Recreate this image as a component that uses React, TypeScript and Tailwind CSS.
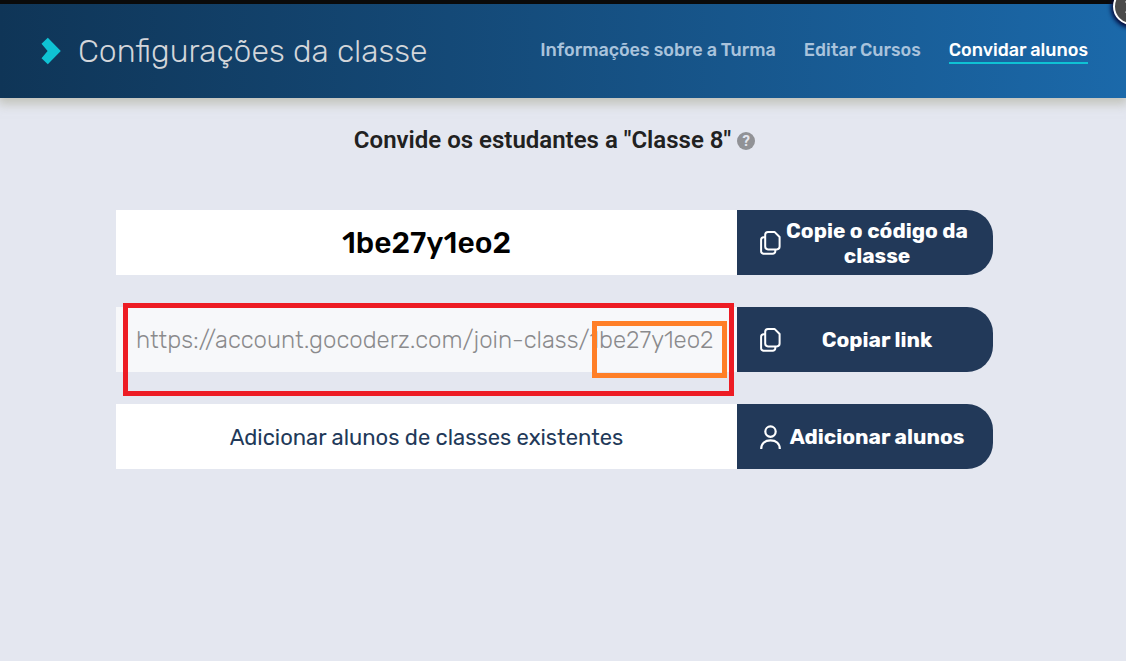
import type { ReactNode } from 'react';

const navItems = [
  { label: 'Informações sobre a Turma', active: false },
  { label: 'Editar Cursos', active: false },
  { label: 'Convidar alunos', active: true },
];

function ChevronMark() {
  return (
    <svg width="20" height="28" viewBox="0 0 20 28" className="shrink-0" aria-hidden="true">
      <path d="M0.5 6.8 6.8 0.8 19.8 14 6.8 27.2 0.5 21.2 6.6 14Z" fill="#0fc2d4" />
    </svg>
  );
}

function CopyIcon() {
  return (
    <svg width="22" height="26" viewBox="0 0 22 26" fill="none" stroke="#fff" strokeWidth="2" strokeLinejoin="round" aria-hidden="true">
      <path d="M8 1.9H14.5L19.6 7V16.6A2.8 2.8 0 0 1 16.8 19.4H8A2.8 2.8 0 0 1 5.2 16.6V4.7A2.8 2.8 0 0 1 8 1.9Z" />
      <path d="M5.2 7.2H3.7A2.6 2.6 0 0 0 1.1 9.8V21.2A2.6 2.6 0 0 0 3.7 23.8H12.7A2.6 2.6 0 0 0 15.3 21.2V19.4" />
    </svg>
  );
}

function UserIcon() {
  return (
    <svg width="22" height="26" viewBox="0 0 22 26" fill="none" stroke="#fff" strokeWidth="2.2" aria-hidden="true">
      <circle cx="10.5" cy="7.6" r="5.2" />
      <path d="M1.2 25C1.2 19.3 5.2 16.4 10.5 16.4S19.8 19.3 19.8 25" />
    </svg>
  );
}

function ActionButton({ icon, children }: { icon: ReactNode; children: ReactNode }) {
  return (
    <button
      type="button"
      className="flex w-64 shrink-0 items-center rounded-r-[26px] bg-[#223959] pr-[21px] pl-[23px] text-[21px] leading-[25px] font-bold text-white"
    >
      <span className="shrink-0">{icon}</span>
      <span className="flex-1 text-center">{children}</span>
    </button>
  );
}

export default function App() {
  return (
    <div className="relative min-h-screen overflow-hidden bg-[#e4e7f0] font-['Rubik','Roboto',sans-serif]">
      <div className="relative z-10 h-1 bg-[#0a0a0a]" />
      <header className="flex h-[94px] items-center justify-between bg-linear-to-r from-[#0f3557] to-[#1b69aa] pr-[38px] pl-[41px] shadow-[0_4px_10px_2px_rgba(170,170,150,0.6)]">
        <div className="flex items-center gap-[17px]">
          <ChevronMark />
          <h1 className="text-[32px] leading-10 font-light text-[#d3d6da]">Configurações da classe</h1>
        </div>
        <nav className="flex gap-7">
          {navItems.map((item) => (
            <a
              key={item.label}
              href="#"
              aria-current={item.active ? 'page' : undefined}
              className={
                item.active
                  ? 'border-b-2 border-[#0fc2d4] text-[18px] leading-6 font-medium text-white'
                  : 'border-b-2 border-transparent text-[18px] leading-6 font-medium text-[#a9c3dc]'
              }
            >
              {item.label}
            </a>
          ))}
        </nav>
      </header>

      <main className="flex flex-col items-center pt-6 pr-[17px]">
        <div className="flex items-center gap-1.5">
          <h2 className="font-['Roboto',sans-serif] text-2xl leading-9 font-semibold text-[#212121]">
            Convide os estudantes a "Classe 8"
          </h2>
          <button
            type="button"
            aria-label="Ajuda"
            className="mt-0.5 flex size-[18px] items-center justify-center rounded-full bg-[#919296] font-['Roboto',sans-serif] text-[15px] leading-none font-bold text-[#e4e7f0]"
          >
            ?
          </button>
        </div>

        <div className="mt-[52px] flex w-full max-w-[877px] flex-col gap-8">
          <section className="flex h-[65px]">
            <p className="flex flex-1 items-center justify-center bg-white pt-0.5 text-[30px] font-medium text-black">1be27y1eo2</p>
            <ActionButton icon={<CopyIcon />}>Copie o código da classe</ActionButton>
          </section>

          <section className="relative flex h-[65px]">
            <input
              type="text"
              readOnly
              aria-label="Link da classe"
              value="https://account.gocoderz.com/join-class/1be27y1eo2"
              className="min-w-0 flex-1 bg-[#f7f8fa] px-5 text-[24px] font-light text-[#8a8a8c] outline-none"
            />
            <ActionButton icon={<CopyIcon />}>Copiar link</ActionButton>
            <div className="pointer-events-none absolute -top-1 left-[7px] h-[93px] w-[611px] border-5 border-[#ed1c24]" />
            <div className="pointer-events-none absolute top-3.5 left-[476px] h-[57px] w-[135px] border-5 border-[#ff7f27]" />
          </section>

          <section className="flex h-[65px]">
            <p className="flex flex-1 items-center justify-center bg-white pt-0.5 text-[22px] text-[#223959]">
              Adicionar alunos de classes existentes
            </p>
            <ActionButton icon={<UserIcon />}>Adicionar alunos</ActionButton>
          </section>
        </div>
      </main>

      <button
        type="button"
        aria-label="Fechar"
        className="absolute -top-3 -right-[24px] z-20 flex size-[37px] items-center justify-center rounded-full border-2 border-white bg-[#4b4b4b] shadow-[0_1px_4px_2px_#040a3c]"
      >
        <svg width="14" height="14" viewBox="0 0 14 14" stroke="#fff" strokeWidth="2.5" aria-hidden="true">
          <path d="M1 1 13 13M13 1 1 13" />
        </svg>
      </button>
    </div>
  );
}
